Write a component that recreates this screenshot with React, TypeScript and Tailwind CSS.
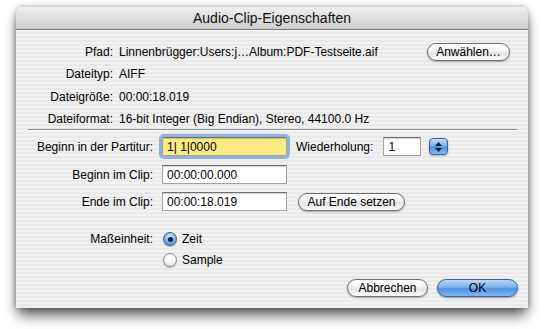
const font = "font-['Liberation_Sans',Arial,sans-serif]";

function PillButton({ label, w, primary }: { label: string; w: string; primary?: boolean }) {
  return (
    <div
      className={`${w} h-[18px] rounded-full flex items-center justify-center text-[12px] text-black border ${
        primary
          ? "border-[#3f5f94] bg-[linear-gradient(180deg,#b9d6f6_0%,#7fb0ea_45%,#4f8fe0_55%,#7db7f4_100%)] shadow-[0_1px_2px_rgba(0,0,0,0.35)]"
          : "border-[#6f6f6f] bg-[linear-gradient(180deg,#ffffff_0%,#f3f3f3_45%,#e2e2e2_55%,#fbfbfb_100%)] shadow-[0_1px_2px_rgba(0,0,0,0.3)]"
      }`}
    >
      {label}
    </div>
  );
}

function Field({ value, w, focused }: { value: string; w: string; focused?: boolean }) {
  return (
    <div
      className={`${w} h-[19px] flex items-center pl-[4px] text-[12px] text-black border border-[#a3a3a3] border-t-[#6f6f6f] shadow-[inset_0_1px_1px_rgba(0,0,0,0.18)] ${
        focused
          ? "bg-[#fbeb85] ring-[3px] ring-[#8fb1de] rounded-[2px]"
          : "bg-white"
      }`}
    >
      {value}
    </div>
  );
}

function Stepper() {
  return (
    <div className="w-[19px] h-[17px] rounded-[4px] border border-[#3c5e96] bg-[linear-gradient(180deg,#c4dcf7_0%,#7db0ea_45%,#4d8ce0_55%,#86bdf5_100%)] shadow-[0_1px_2px_rgba(0,0,0,0.3)] flex flex-col items-center justify-center gap-[2px]">
      <svg width="7" height="4" viewBox="0 0 7 4">
        <path d="M3.5 0 L7 4 L0 4 Z" fill="#0c1d3a" />
      </svg>
      <svg width="7" height="4" viewBox="0 0 7 4">
        <path d="M0 0 L7 0 L3.5 4 Z" fill="#0c1d3a" />
      </svg>
    </div>
  );
}

function Radio({ checked }: { checked?: boolean }) {
  return (
    <div
      className={`w-[14px] h-[14px] rounded-full border flex items-center justify-center shadow-[0_1px_1px_rgba(0,0,0,0.25)] ${
        checked
          ? "border-[#3c5e96] bg-[radial-gradient(circle_at_50%_30%,#d6e8fb_0%,#7fb3ec_50%,#3f82db_100%)]"
          : "border-[#8a8a8a] bg-[radial-gradient(circle_at_50%_30%,#ffffff_0%,#f1f1f1_55%,#cfcfcf_100%)]"
      }`}
    >
      {checked && <div className="w-[5px] h-[5px] rounded-full bg-[#0d1b33]" />}
    </div>
  );
}

export default function App() {
  return (
    <div className={`w-[546px] h-[329px] bg-white pl-[16px] pt-[7px] overflow-hidden ${font}`}>
      <div className="w-[512px] h-[301px] flex flex-col rounded-t-[7px] overflow-hidden shadow-[0_9px_14px_-2px_rgba(0,0,0,0.65),0_0_6px_rgba(0,0,0,0.35)]">
        <div className="h-[23px] shrink-0 flex items-center justify-center border-b border-[#7d7d7d] bg-[linear-gradient(180deg,#f0f0f0_0%,#dedede_50%,#cdcdcd_100%)] text-[14px] text-[#111]">
          Audio-Clip-Eigenschaften
        </div>
        <div className="flex-1 flex flex-col bg-[repeating-linear-gradient(180deg,#f1f1f1_0px,#f1f1f1_2px,#e9e9e9_2px,#e9e9e9_4px)] text-[12px] text-black">
          <div className="grid grid-cols-[97px_1fr] gap-x-[6px] pt-[11px]">
            <div className="h-[22px] flex items-center justify-end">Pfad:</div>
            <div className="h-[22px] flex items-center justify-between pr-[18px]">
              <span>Linnenbrügger:Users:j…Album:PDF-Testseite.aif</span>
              <PillButton label="Anwählen…" w="w-[83px]" />
            </div>
            <div className="h-[22px] flex items-center justify-end">Dateityp:</div>
            <div className="h-[22px] flex items-center">AIFF</div>
            <div className="h-[23px] flex items-center justify-end">Dateigröße:</div>
            <div className="h-[23px] flex items-center">00:00:18.019</div>
            <div className="h-[21px] flex items-center justify-end">Dateiformat:</div>
            <div className="h-[21px] flex items-center">16-bit Integer (Big Endian), Stereo, 44100.0 Hz</div>
          </div>
          <div className="ml-[12px] mr-[11px] h-[2px] border-t border-[#8f8f8f] border-b border-b-[#fafafa]" />
          <div className="flex flex-col pt-[6px]">
            <div className="flex items-center h-[19px]">
              <div className="w-[137px] text-right">Beginn in der Partitur:</div>
              <div className="ml-[9px]">
                <Field value="1| 1|0000" w="w-[125px]" focused />
              </div>
              <div className="ml-[9px]">Wiederholung:</div>
              <div className="ml-[10px]">
                <Field value="1" w="w-[38px]" />
              </div>
              <div className="ml-[8px]">
                <Stepper />
              </div>
            </div>
            <div className="flex items-center h-[19px] mt-[9px]">
              <div className="w-[137px] text-right">Beginn im Clip:</div>
              <div className="ml-[9px]">
                <Field value="00:00:00.000" w="w-[125px]" />
              </div>
            </div>
            <div className="flex items-center h-[19px] mt-[8px]">
              <div className="w-[137px] text-right">Ende im Clip:</div>
              <div className="ml-[9px]">
                <Field value="00:00:18.019" w="w-[125px]" />
              </div>
              <div className="ml-[11px]">
                <PillButton label="Auf Ende setzen" w="w-[107px]" />
              </div>
            </div>
            <div className="flex items-center h-[14px] mt-[21px]">
              <div className="w-[137px] text-right">Maßeinheit:</div>
              <div className="ml-[10px] flex items-center gap-[5px]">
                <Radio checked />
                <span>Zeit</span>
              </div>
            </div>
            <div className="flex items-center h-[14px] mt-[7px]">
              <div className="w-[137px]" />
              <div className="ml-[10px] flex items-center gap-[5px]">
                <Radio />
                <span>Sample</span>
              </div>
            </div>
            <div className="flex justify-end gap-[9px] pr-[10px] mt-[12px]">
              <PillButton label="Abbrechen" w="w-[81px]" />
              <PillButton label="OK" w="w-[81px]" primary />
            </div>
          </div>
        </div>
      </div>
    </div>
  );
}
